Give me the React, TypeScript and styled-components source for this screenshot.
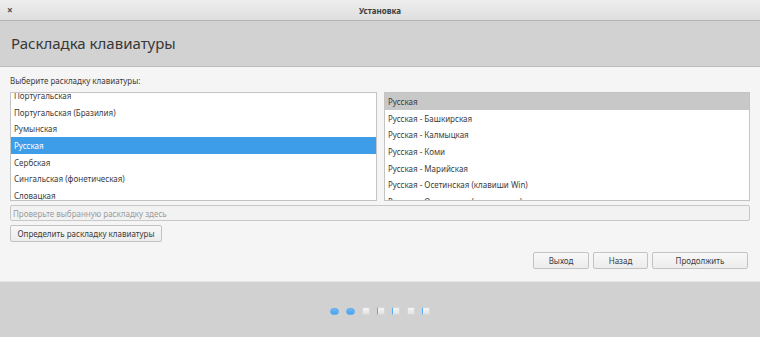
import React from "react";
import styled, { createGlobalStyle } from "styled-components";

const GlobalStyle = createGlobalStyle`
  html, body {
    margin: 0;
    padding: 0;
    background: #f5f5f5;
  }
  body {
    font-family: "Noto Sans", "DejaVu Sans", sans-serif;
    color: #3c3c3c;
  }
  * {
    box-sizing: border-box;
  }
`;

const layouts = [
  "Португальская",
  "Португальская (Бразилия)",
  "Румынская",
  "Русская",
  "Сербская",
  "Сингальская (фонетическая)",
  "Словацкая",
];

const variants = [
  "Русская",
  "Русская - Башкирская",
  "Русская - Калмыцкая",
  "Русская - Коми",
  "Русская - Марийская",
  "Русская - Осетинская (клавиши Win)",
  "Русская - Осетинская (устаревшая)",
];

// 0 = done (blue pill), 1 = pending square, 2 = pending square with blue edge
const steps = [0, 0, 1, 2, 2, 1, 2];

const Window = styled.div`
  display: flex;
  flex-direction: column;
  width: 760px;
  height: 337px;
  overflow: hidden;
`;

const TitleBar = styled.div`
  display: grid;
  grid-template-columns: 40px 1fr 40px;
  align-items: center;
  height: 21px;
  background: linear-gradient(#eeeeee, #dedede);
  border-bottom: 1px solid #b4b4b4;
`;

const CloseButton = styled.span`
  padding-left: 7px;
  font-size: 10px;
  font-weight: bold;
  color: #4a4a4a;
  line-height: 1;
`;

const WindowTitle = styled.span`
  text-align: center;
  font-size: 8px;
  font-weight: bold;
  color: #3c3c3c;
`;

const Header = styled.div`
  display: flex;
  align-items: center;
  height: 46px;
  padding-left: 11px;
  padding-bottom: 1px;
  background: #d2d2d2;
  border-bottom: 1px solid #bcbcbc;
  font-size: 15px;
  color: #383838;
`;

const Content = styled.div`
  display: flex;
  flex-direction: column;
  height: 215px;
  padding: 8px 10px 0 10px;
  background: #f5f5f5;
  border-bottom: 1px solid #e6e6e6;
`;

const Label = styled.div`
  font-size: 8px;
  line-height: 12px;
  height: 12px;
  margin-bottom: 5px;
`;

const Lists = styled.div`
  display: grid;
  grid-template-columns: 367px 366px;
  column-gap: 7px;
  height: 109px;
`;

const ListBox = styled.div`
  border: 1px solid #c4c4c4;
  background: #ffffff;
  overflow: hidden;
`;

const ListInner = styled.div<{ $shift: number }>`
  margin-top: ${(p) => -p.$shift}px;
`;

const Row = styled.div<{ $state?: "active" | "inactive" }>`
  height: 16.67px;
  line-height: 16.67px;
  padding: 1px 0 0 3px;
  font-size: 8px;
  white-space: nowrap;
  background: ${(p) =>
    p.$state === "active" ? "#3d9de8" : p.$state === "inactive" ? "#c8c8c8" : "transparent"};
  color: ${(p) => (p.$state === "active" ? "#ffffff" : "#3c3c3c")};
`;

const TestInput = styled.input`
  margin-top: 4px;
  height: 16px;
  width: 100%;
  padding: 0 2px;
  border: 1px solid #c8c8c8;
  border-radius: 2px;
  background: #f2f2f2;
  font-family: inherit;
  font-size: 8px;
  color: #3c3c3c;
  outline: none;

  &::placeholder {
    color: #9c9c9c;
  }
`;

const Button = styled.button<{ $width: number }>`
  width: ${(p) => p.$width}px;
  height: 17px;
  padding: 0;
  border: 1px solid #c3c3c3;
  border-radius: 2px;
  background: linear-gradient(#f8f8f8, #ececec);
  font-family: inherit;
  font-size: 8px;
  line-height: 15px;
  white-space: nowrap;
  color: #3c3c3c;
`;

const DetectRow = styled.div`
  margin-top: 4px;
  display: flex;
`;

const NavRow = styled.div`
  display: flex;
  justify-content: flex-end;
  gap: 4px;
  margin-top: 10px;
  padding-right: 2px;
`;

const Footer = styled.div`
  flex: 1;
  display: flex;
  justify-content: center;
  align-items: center;
  gap: 7px;
  padding-top: 3px;
  background: #d1d1d1;
`;

const Step = styled.span<{ $kind: number }>`
  display: block;
  width: ${(p) => (p.$kind === 0 ? 9 : 8)}px;
  height: ${(p) => (p.$kind === 0 ? 7 : 8)}px;
  border-radius: ${(p) => (p.$kind === 0 ? "4px" : "1px")};
  background: ${(p) =>
    p.$kind === 0 ? "linear-gradient(#6cb6f5, #4aa3ee)" : "linear-gradient(#f4f4f4, #e2e2e2)"};
  border: 1px solid ${(p) => (p.$kind === 0 ? "#5aa9ef" : "#d6d6d6")};
  border-left: 1px solid
    ${(p) => (p.$kind === 0 ? "#5aa9ef" : p.$kind === 2 ? "#5aaaf0" : "#d6d6d6")};
`;

export default function App() {
  return (
    <>
      <GlobalStyle />
      <Window>
        <TitleBar>
          <CloseButton>×</CloseButton>
          <WindowTitle>Установка</WindowTitle>
          <span />
        </TitleBar>
        <Header>Раскладка клавиатуры</Header>
        <Content>
          <Label>Выберите раскладку клавиатуры:</Label>
          <Lists>
            <ListBox>
              <ListInner $shift={6}>
                {layouts.map((name) => (
                  <Row key={name} $state={name === "Русская" ? "active" : undefined}>
                    {name}
                  </Row>
                ))}
              </ListInner>
            </ListBox>
            <ListBox>
              <ListInner $shift={0}>
                {variants.map((name, i) => (
                  <Row key={name} $state={i === 0 ? "inactive" : undefined}>
                    {name}
                  </Row>
                ))}
              </ListInner>
            </ListBox>
          </Lists>
          <TestInput placeholder="Проверьте выбранную раскладку здесь" />
          <DetectRow>
            <Button $width={152}>Определить раскладку клавиатуры</Button>
          </DetectRow>
          <NavRow>
            <Button $width={56}>Выход</Button>
            <Button $width={55}>Назад</Button>
            <Button $width={96}>Продолжить</Button>
          </NavRow>
        </Content>
        <Footer>
          {steps.map((k, i) => (
            <Step key={i} $kind={k} />
          ))}
        </Footer>
      </Window>
    </>
  );
}
